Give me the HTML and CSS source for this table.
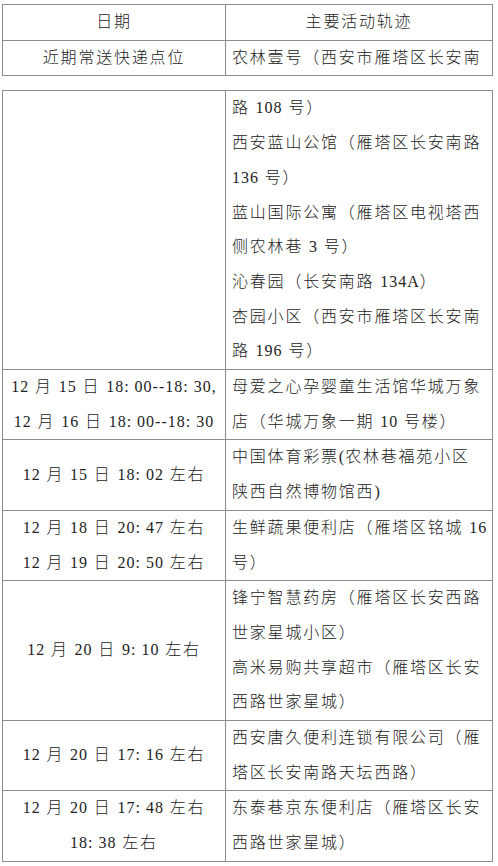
FILE: index.html
```html
<!DOCTYPE html>
<html lang="zh-CN">
<head>
<meta charset="utf-8">
<title>活动轨迹</title>
<link rel="stylesheet" href="styles.css">
</head>
<body>
<div class="page">
  <table class="grid">
    <colgroup><col class="c-date"><col class="c-place"></colgroup>
    <tr>
      <td class="date">日期</td>
      <td class="date">主要活动轨迹</td>
    </tr>
    <tr>
      <td class="date">近期常送快递点位</td>
      <td class="place">农林壹号（西安市雁塔区长安南</td>
    </tr>
  </table>

  <table class="grid second">
    <colgroup><col class="c-date"><col class="c-place"></colgroup>
    <tr>
      <td class="date"></td>
      <td class="place">路 <span class="n">108</span> 号）<br>西安蓝山公馆（雁塔区长安南路<br><span class="n">136</span> 号）<br>蓝山国际公寓（雁塔区电视塔西<br>侧农林巷 <span class="n">3</span> 号）<br>沁春园（长安南路 <span class="n">134A</span>）<br>杏园小区（西安市雁塔区长安南<br>路 <span class="n">196</span> 号）</td>
    </tr>
    <tr>
      <td class="date"><span class="n">12</span> 月 <span class="n">15</span> 日 <span class="n">18: 00--18: 30,</span><br><span class="n">12</span> 月 <span class="n">16</span> 日 <span class="n">18: 00--18: 30</span></td>
      <td class="place">母爱之心孕婴童生活馆华城万象<br>店（华城万象一期 <span class="n">10</span> 号楼）</td>
    </tr>
    <tr>
      <td class="date"><span class="n">12</span> 月 <span class="n">15</span> 日 <span class="n">18: 02</span> 左右</td>
      <td class="place">中国体育彩票<span class="n">(</span>农林巷福苑小区<br>陕西自然博物馆西<span class="n">)</span></td>
    </tr>
    <tr>
      <td class="date"><span class="n">12</span> 月 <span class="n">18</span> 日 <span class="n">20: 47</span> 左右<br><span class="n">12</span> 月 <span class="n">19</span> 日 <span class="n">20: 50</span> 左右</td>
      <td class="place">生鲜蔬果便利店（雁塔区铭城 <span class="n">16</span><br>号）</td>
    </tr>
    <tr>
      <td class="date"><span class="n">12</span> 月 <span class="n">20</span> 日 <span class="n">9: 10</span> 左右</td>
      <td class="place">锋宁智慧药房（雁塔区长安西路<br>世家星城小区）<br>高米易购共享超市（雁塔区长安<br>西路世家星城）</td>
    </tr>
    <tr>
      <td class="date"><span class="n">12</span> 月 <span class="n">20</span> 日 <span class="n">17: 16</span> 左右</td>
      <td class="place">西安唐久便利连锁有限公司（雁<br>塔区长安南路天坛西路）</td>
    </tr>
    <tr>
      <td class="date"><span class="n">12</span> 月 <span class="n">20</span> 日 <span class="n">17: 48</span> 左右<br><span class="n">18: 38</span> 左右</td>
      <td class="place">东泰巷京东便利店（雁塔区长安<br>西路世家星城）</td>
    </tr>
  </table>
</div>
</body>
</html>
```

FILE: styles.css
```css
html, body {
  margin: 0;
  padding: 0;
  background: #ffffff;
}

.page {
  padding: 4px 0 0 2px;
}

.grid {
  border-collapse: collapse;
  table-layout: fixed;
  width: 490px;
  font-family: "Liberation Serif", "Noto Sans CJK SC", serif;
  font-size: 16px;
  font-weight: 300;
  color: #222222;
  letter-spacing: 1.8px;
  line-height: 34.7px;
}

.second {
  margin-top: 14px;
}

.c-date {
  width: 223px;
}

.c-place {
  width: 267px;
}

.grid td {
  border: 1px solid #8c8c8c;
  padding: 0 4px 0 6px;
  white-space: nowrap;
  overflow: hidden;
}

.grid td.date {
  text-align: center;
  vertical-align: middle;
  padding: 0 2px;
}

.grid td.place {
  text-align: left;
  vertical-align: top;
}

.n {
  letter-spacing: 1px;
}
```
